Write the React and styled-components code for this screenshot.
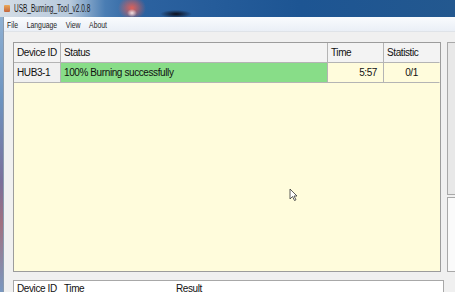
import React from 'react';
import styled, { createGlobalStyle } from 'styled-components';

const GlobalStyle = createGlobalStyle`
  html, body {
    margin: 0;
    padding: 0;
    background: #f0f0f0;
  }
  body {
    font-family: "Liberation Sans", Arial, sans-serif;
  }
`;

const Window = styled.div`
  position: relative;
  width: 455px;
  height: 292px;
  overflow: hidden;
  display: flex;
  flex-direction: column;
  background: #f0f0f0;
`;

const TitleBar = styled.div`
  height: 17px;
  flex: none;
  display: flex;
  align-items: center;
  gap: 4px;
  padding-left: 4px;
  background:
    radial-gradient(ellipse 5px 4px at 132px 13px, rgba(255, 240, 240, 0.9), rgba(255, 240, 240, 0) 100%),
    radial-gradient(ellipse 14px 12px at 132px 8px, rgba(222, 96, 88, 1), rgba(210, 90, 90, 0) 100%),
    radial-gradient(ellipse 16px 4px at 176px 14px, rgba(10, 10, 20, 0.95), rgba(10, 10, 20, 0) 100%),
    linear-gradient(90deg, #d4dde6 0px, #b7c9dc 70px, #4a7db3 105px, #2c62a0 140px, #1d5593 300px, #23588f 455px);
`;

const AppIcon = styled.div`
  width: 6px;
  height: 7px;
  background: linear-gradient(180deg, #f0a040, #c05020);
  border-radius: 1px;
  opacity: 0.85;
`;

const Title = styled.span`
  font-size: 10px;
  color: #1a1a1a;
  transform: scaleX(0.65);
  transform-origin: left center;
  white-space: nowrap;
`;

const Lower = styled.div`
  flex: 1;
  display: flex;
  min-height: 0;
`;

const FrameEdge = styled.div`
  width: 3px;
  flex: none;
  background: linear-gradient(180deg, #8fb0d2 0%, #6c93c0 30%, #7a6f9a 60%, #a07080 75%, #7a98c0 100%);
  border-right: 1px solid #8a9aad;
`;

const Client = styled.div`
  flex: 1;
  display: flex;
  flex-direction: column;
  min-width: 0;
`;

const MenuBar = styled.div`
  height: 14px;
  flex: none;
  display: flex;
  align-items: center;
  padding-left: 3px;
  background: linear-gradient(180deg, #f9fbfd, #eaeff6);
  border-bottom: 1px solid #dfe3e8;
`;

const MenuList = styled.div`
  display: flex;
  gap: 12px;
  transform: scaleX(0.72);
  transform-origin: left center;
`;

const MenuItem = styled.span`
  font-size: 9.5px;
  color: #1e1e1e;
  white-space: nowrap;
`;

const Content = styled.div`
  flex: 1;
  display: flex;
  flex-direction: column;
  padding: 10px 0 0 9px;
  gap: 8px;
`;

const TopRow = styled.div`
  display: flex;
  gap: 6px;
  height: 230px;
  flex: none;
`;

const Grid = styled.div`
  width: 428px;
  flex: none;
  box-sizing: border-box;
  border: 1px solid #9c9c9c;
  background: #fffcdc;
  display: grid;
  grid-template-columns: 47px 267px 56px 56px;
  grid-auto-rows: 20px;
  align-content: start;
`;

const Cell = styled.div`
  box-sizing: border-box;
  display: flex;
  align-items: center;
  justify-content: ${p => (p.$align === 'right' ? 'flex-end' : p.$align === 'center' ? 'center' : 'flex-start')};
  padding: ${p => (p.$align === 'right' ? '0 6px 0 0' : p.$align === 'center' ? '0' : '0 0 0 3px')};
  font-size: 10px;
  letter-spacing: -0.4px;
  color: #111;
  white-space: nowrap;
  overflow: hidden;
  background: ${p => p.$bg || 'transparent'};
  border-right: 1px solid ${p => (p.$last ? 'transparent' : '#b4b4b4')};
  border-bottom: 1px solid #b4b4b4;
`;

const SidePanel = styled.div`
  flex: 1;
  display: flex;
  flex-direction: column;
  gap: 2px;
`;

const SideBox = styled.div`
  box-sizing: border-box;
  height: ${p => p.$h};
  border: 1px solid #a8a8a8;
  border-right: none;
  background: ${p => p.$bg};
`;

const ResultTable = styled.div`
  width: 431px;
  box-sizing: border-box;
  border: 1px solid #a8a8a8;
  border-bottom: none;
  background: #fff;
  display: grid;
  grid-template-columns: 47px 112px 1fr;
  height: 20px;
`;

const ResultHead = styled.div`
  font-size: 10px;
  line-height: 11px;
  letter-spacing: -0.4px;
  color: #111;
  padding: 2px 0 0 3px;
`;

const Cursor = styled.svg`
  position: absolute;
  left: 289px;
  top: 188px;
`;

const columns = ['Device ID', 'Status', 'Time', 'Statistic'];

export default function App() {
  return (
    <Window>
      <GlobalStyle />
      <TitleBar>
        <AppIcon />
        <Title>USB_Burning_Tool_v2.0.8</Title>
      </TitleBar>
      <Lower>
        <FrameEdge />
        <Client>
          <MenuBar>
            <MenuList>
              <MenuItem>File</MenuItem>
              <MenuItem>Language</MenuItem>
              <MenuItem>View</MenuItem>
              <MenuItem>About</MenuItem>
            </MenuList>
          </MenuBar>
          <Content>
            <TopRow>
              <Grid>
                {columns.map((c, i) => (
                  <Cell key={c} $bg="#f3f3f3" $last={i === columns.length - 1}>{c}</Cell>
                ))}
                <Cell $bg="#f0f0f0">HUB3-1</Cell>
                <Cell $bg="#88dd88">100% Burning successfully</Cell>
                <Cell $align="right">5:57</Cell>
                <Cell $align="center" $last>0/1</Cell>
              </Grid>
              <SidePanel>
                <SideBox $h="153px" $bg="#e8e8e8" />
                <SideBox $h="75px" $bg="#fafafa" />
              </SidePanel>
            </TopRow>
            <ResultTable>
              <ResultHead>Device ID</ResultHead>
              <ResultHead>Time</ResultHead>
              <ResultHead>Result</ResultHead>
            </ResultTable>
          </Content>
        </Client>
      </Lower>
      <Cursor width="9" height="14" viewBox="0 0 9 14">
        <path d="M1 1 L1 11 L3.5 8.5 L5.5 12.5 L7 11.8 L5 8 L8 8 Z" fill="#fff" stroke="#333" strokeWidth="0.8" strokeLinejoin="round" />
      </Cursor>
    </Window>
  );
}
